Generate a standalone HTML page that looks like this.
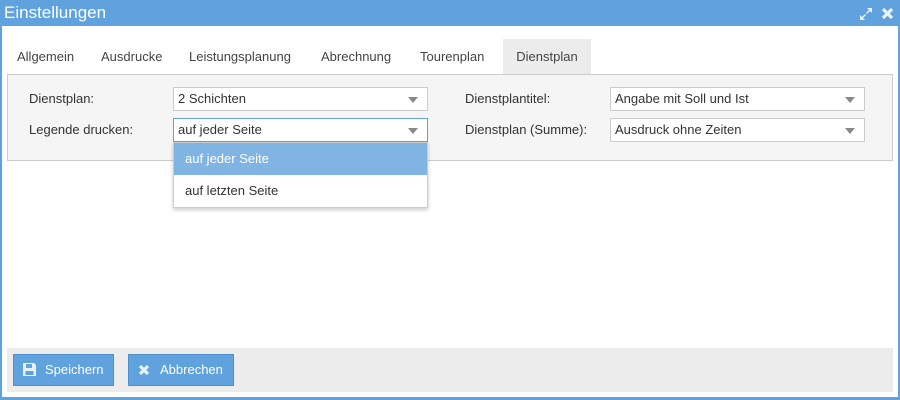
<!DOCTYPE html>
<html><head><style>
*{box-sizing:border-box;margin:0;padding:0}
body{width:900px;height:400px;overflow:hidden;background:#fff;font-family:"Liberation Sans","DejaVu Sans",sans-serif;font-size:13px;color:#333;position:relative}
.frame{position:absolute;left:0;top:0;width:900px;height:400px;border:2px solid #5fa2dd;border-top:none;border-bottom:3px solid #5fa2dd}
.title{position:absolute;left:0;top:0;width:900px;height:26px;background:#5fa2dd;color:#fff;font-size:17px;line-height:26px;padding-left:4px}
.tab{position:absolute;top:39px;height:35px;line-height:36px;color:#444;font-size:13px;white-space:nowrap}
.panel{position:absolute;left:7px;top:74px;width:886px;height:87px;background:#f5f5f5;border:1px solid #ccc}
.lbl{position:absolute;font-size:13px;color:#333}
.sel{position:absolute;width:255px;height:24px;background:#fff;border:1px solid #ccc;padding-left:4px;line-height:22px;font-size:13px;color:#333}
.sel:after{content:"";position:absolute;right:9px;top:9px;border-left:5px solid transparent;border-right:5px solid transparent;border-top:6px solid #888}
.dd{position:absolute;left:173px;top:142px;width:255px;height:66px;background:#fff;border:1px solid #ccc;box-shadow:0 2px 4px rgba(0,0,0,.2)}
.dd div{height:32px;line-height:32px;padding-left:11px}
.foot{position:absolute;left:7px;top:348px;width:886px;height:44px;background:#ececec}
.btn{position:absolute;top:354px;height:32px;background:#5fa2dd;border:1px solid #4f90cc;color:#fff;line-height:30px;font-size:13px}
</style></head><body>
<div class="title">Einstellungen</div>
<svg style="position:absolute;left:858px;top:6px" width="16" height="16" viewBox="0 0 16 16"><path d="M9 2h5v5l-2-2-3 3-1-1 3-3zM7 14H2V9l2 2 3-3 1 1-3 3z" fill="#e8f2fb"/></svg>
<svg style="position:absolute;left:881px;top:7px" width="13" height="13" viewBox="0 0 13 13"><path d="M2 2l9 9M11 2l-9 9" stroke="#e8f2fb" stroke-width="3.2"/></svg>
<div class="tab" style="left:17px">Allgemein</div>
<div class="tab" style="left:101px">Ausdrucke</div>
<div class="tab" style="left:189px">Leistungsplanung</div>
<div class="tab" style="left:321px">Abrechnung</div>
<div class="tab" style="left:420px">Tourenplan</div>
<div class="tab" style="left:503px;width:88px;background:#ececec;text-align:center">Dienstplan</div>
<div class="panel"></div>
<div class="lbl" style="left:29px;top:91px">Dienstplan:</div>
<div class="lbl" style="left:29px;top:122px">Legende drucken:</div>
<div class="sel" style="left:173px;top:87px">2 Schichten</div>
<div class="sel" style="left:173px;top:118px;border-color:#5fa2dd">auf jeder Seite</div>
<div class="lbl" style="left:465px;top:91px">Dienstplantitel:</div>
<div class="lbl" style="left:465px;top:122px">Dienstplan (Summe):</div>
<div class="sel" style="left:610px;top:87px">Angabe mit Soll und Ist</div>
<div class="sel" style="left:610px;top:118px">Ausdruck ohne Zeiten</div>
<div class="dd"><div style="background:#7fb4e3;color:#fff">auf jeder Seite</div><div>auf letzten Seite</div></div>
<div class="foot"></div>
<div class="btn" style="left:13px;width:101px;padding-left:31px">Speichern</div>
<svg style="position:absolute;left:22px;top:362px" width="15" height="15" viewBox="0 0 15 15"><path d="M1 1h11l2 2v11H1z" fill="#e8f2fb"/><rect x="4" y="2" width="6" height="4" fill="#5fa2dd"/><rect x="3.5" y="9" width="8" height="4" fill="#5fa2dd"/></svg>
<div class="btn" style="left:128px;width:106px;padding-left:31px">Abbrechen</div>
<svg style="position:absolute;left:138px;top:364px" width="12" height="12" viewBox="0 0 12 12"><path d="M2 2l8 8M10 2l-8 8" stroke="#e8f2fb" stroke-width="3.2"/></svg>
<div class="frame"></div>
</body></html>
